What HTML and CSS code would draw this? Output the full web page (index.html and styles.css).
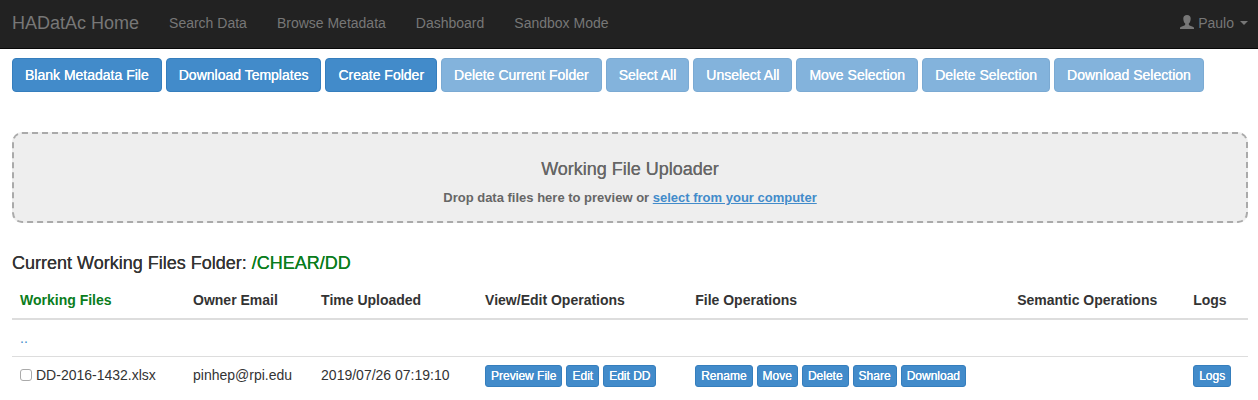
FILE: index.html
```html
<!DOCTYPE html>
<html lang="en">
<head>
<meta charset="utf-8">
<title>HADatAc - Working Files</title>
<link rel="stylesheet" href="styles.css">
</head>
<body>
<nav class="navbar">
  <a class="brand" href="#">HADatAc Home</a>
  <a class="nav-link" href="#">Search Data</a>
  <a class="nav-link" href="#">Browse Metadata</a>
  <a class="nav-link" href="#">Dashboard</a>
  <a class="nav-link" href="#">Sandbox Mode</a>
  <button class="user-menu" type="button">
    <svg class="user-icon" viewBox="0 0 14 14" aria-hidden="true"><path d="M7 0C4.700 0 3.300 1.300 3.300 3.500C3.300 5.600 4 7.500 5.200 8.600V9.600C5.200 10 4.900 10.200 4.400 10.400L1.200 11.700C.4 12 0 12.400 0 13V14H14V13C14 12.400 13.600 12 12.800 11.700L9.600 10.400C9.100 10.200 8.800 10 8.800 9.600V8.600C10 7.500 10.700 5.600 10.700 3.500C10.700 1.300 9.300 0 7 0Z"/></svg>
    <span>Paulo</span>
    <span class="caret"></span>
  </button>
</nav>
<main class="content">
  <div class="toolbar">
    <button class="btn" type="button">Blank Metadata File</button>
    <button class="btn" type="button">Download Templates</button>
    <button class="btn" type="button">Create Folder</button>
    <button class="btn" type="button" disabled>Delete Current Folder</button>
    <button class="btn" type="button" disabled>Select All</button>
    <button class="btn" type="button" disabled>Unselect All</button>
    <button class="btn" type="button" disabled>Move Selection</button>
    <button class="btn" type="button" disabled>Delete Selection</button>
    <button class="btn" type="button" disabled>Download Selection</button>
  </div>
  <section class="uploader">
    <h4 class="heading">Working File Uploader</h4>
    <p class="drop-hint">Drop data files here to preview or <a class="browse" href="#">select from your computer</a></p>
  </section>
  <h4 class="heading">Current Working Files Folder: <span class="green">/CHEAR/DD</span></h4>
  <table class="files">
    <colgroup>
      <col class="col-name"><col class="col-owner"><col class="col-time"><col class="col-view"><col class="col-file"><col class="col-semantic"><col class="col-logs">
    </colgroup>
    <thead>
      <tr>
        <th class="green">Working Files</th>
        <th>Owner Email</th>
        <th>Time Uploaded</th>
        <th>View/Edit Operations</th>
        <th>File Operations</th>
        <th>Semantic Operations</th>
        <th>Logs</th>
      </tr>
    </thead>
    <tbody>
      <tr>
        <td><a class="parent" href="#">..</a></td>
        <td></td><td></td><td></td><td></td><td></td><td></td>
      </tr>
      <tr>
        <td><label class="file"><input class="check" type="checkbox">DD-2016-1432.xlsx</label></td>
        <td>pinhep@rpi.edu</td>
        <td>2019/07/26 07:19:10</td>
        <td><div class="actions">
          <button class="btn btn-xs" type="button">Preview File</button>
          <button class="btn btn-xs" type="button">Edit</button>
          <button class="btn btn-xs" type="button">Edit DD</button>
        </div></td>
        <td><div class="actions">
          <button class="btn btn-xs" type="button">Rename</button>
          <button class="btn btn-xs" type="button">Move</button>
          <button class="btn btn-xs" type="button">Delete</button>
          <button class="btn btn-xs" type="button">Share</button>
          <button class="btn btn-xs" type="button">Download</button>
        </div></td>
        <td></td>
        <td><div class="actions"><button class="btn btn-xs" type="button">Logs</button></div></td>
      </tr>
    </tbody>
  </table>
</main>
</body>
</html>
```
FILE: styles.css
```css
* {
  box-sizing: border-box;
}

body {
  margin: 0;
  background: #fff;
  color: #333;
  font: 14px/20px "Helvetica Neue", Helvetica, "Liberation Sans", Arial, sans-serif;
}

.navbar {
  display: flex;
  align-items: center;
  gap: 30px;
  padding: 13px 10px 15px 12px;
  background: #222;
  border-bottom: 1px solid #080808;
}

.brand,
.nav-link,
.user-menu {
  color: #777;
  text-decoration: none;
  white-space: nowrap;
}

.navbar .brand {
  font-size: 18px;
}

.user-menu {
  display: flex;
  align-items: center;
  gap: 4px;
  margin-left: auto;
  padding: 0;
  border: 0;
  background: none;
  font: inherit;
}

.user-icon {
  width: 14px;
  height: 14px;
  margin-bottom: 2px;
  fill: currentColor;
}

.caret {
  margin-left: 2px;
  border-top: 4px solid;
  border-left: 4px solid transparent;
  border-right: 4px solid transparent;
}

.content {
  padding: 9px 10px 0 12px;
}

.toolbar {
  display: flex;
  flex-wrap: wrap;
  gap: 4px;
  margin-bottom: 40px;
}

.btn {
  padding: 6px 12px;
  border: 1px solid #357ebd;
  border-radius: 4px;
  background: #428bca;
  color: #fff;
  font: inherit;
  text-shadow: 0 0 0 currentColor;
  white-space: nowrap;
}

.btn:disabled {
  opacity: 0.65;
}

.btn-xs {
  padding: 1px 5px;
  border-radius: 3px;
  font-size: 12px;
  line-height: 18px;
}

.uploader {
  margin-bottom: 30px;
  padding: 25px 0 13px;
  border: 2px dashed #aaa;
  border-radius: 10px;
  background: #eee;
  color: #666;
  text-align: center;
}

.heading {
  margin: 0 0 9px;
  font-size: 18px;
  font-weight: 500;
  line-height: 20px;
  text-shadow: 0 0 0 currentColor;
}

.drop-hint {
  margin: 0;
  font-size: 13px;
  font-weight: bold;
}

.browse,
.parent {
  color: #428bca;
}

.parent {
  text-decoration: none;
}

.green {
  color: #0a7d1c;
}

.files {
  width: 100%;
  table-layout: fixed;
  border-collapse: separate;
  border-spacing: 0;
}

.col-name { width: 14%; }
.col-owner { width: 10.36%; }
.col-time { width: 13.27%; }
.col-view { width: 17%; }
.col-file { width: 26.05%; }
.col-semantic { width: 14.24%; }
.col-logs { width: 5.08%; }

.files th,
.files td {
  padding: 8px;
  text-align: left;
  vertical-align: top;
  white-space: nowrap;
}

.files th {
  border-bottom: 2px solid #ddd;
}

.files tr + tr td {
  border-top: 1px solid #ddd;
}

.file {
  display: flex;
  align-items: center;
  gap: 4px;
}

.check {
  appearance: none;
  width: 12px;
  height: 12px;
  margin: 0;
  border: 1px solid #aaa;
  border-radius: 3px;
  background: #fff;
}

.check:checked {
  background: #428bca;
}

.actions {
  display: flex;
  gap: 4px;
}
```
